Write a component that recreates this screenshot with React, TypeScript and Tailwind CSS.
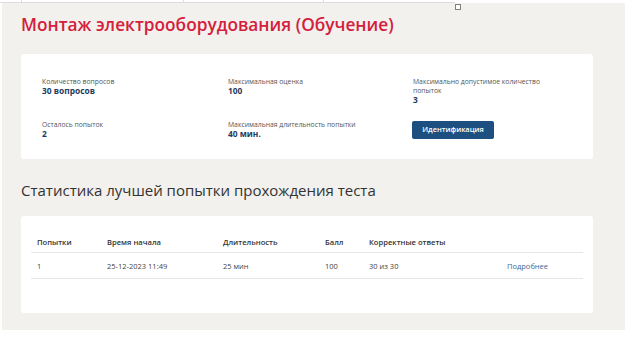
import React from "react";

const font = { fontFamily: '"Open Sans", "Noto Sans", sans-serif' };

function Info({ label, value }: { label: React.ReactNode; value: string }) {
  return (
    <div className="flex flex-col">
      <span className="text-[6.8px] leading-[9px] text-[#555]">{label}</span>
      <span className="text-[8.4px] leading-[10px] font-bold text-[#1f3b5e]">{value}</span>
    </div>
  );
}

export default function App() {
  return (
    <div className="w-[634px] h-[346px] bg-white relative overflow-hidden" style={font}>
      {/* top document strip */}
      <div className="h-[3px] relative">
        <div className="absolute left-0 top-[2px] w-[455px] h-px bg-[#dcdcdc]" />
        <div className="absolute left-[21px] top-0 w-px h-[3px] bg-[#dcdcdc]" />
        <div className="absolute left-[183px] top-0 w-px h-[3px] bg-[#dcdcdc]" />
        <div className="absolute left-[323px] top-0 w-px h-[3px] bg-[#dcdcdc]" />
      </div>
      <div className="absolute left-[455px] top-[4px] w-[6px] h-[6px] border border-[#808080] bg-white" />
      <div className="ml-[2px] w-[623px] h-[327px] bg-[#f2f1ee] pl-[19px] pt-[9px]">
        <h1 className="text-[17.3px] leading-[26px] font-semibold text-[#d4203b]">
          Монтаж электрооборудования (Обучение)
        </h1>
        <div className="mt-[16px] w-[572px] h-[105px] bg-white rounded-[3px] pl-[21px] pt-[23px]">
          <div className="grid grid-cols-[186px_185px_150px] gap-y-[15px]">
            <Info label="Количество вопросов" value="30 вопросов" />
            <Info label="Максимальная оценка" value="100" />
            <Info label={<>Максимально допустимое количество<br />попыток</>} value="3" />
            <Info label="Осталось попыток" value="2" />
            <Info label="Максимальная длительность попытки" value="40 мин." />
            <div className="-mt-[6px] -ml-[1px]">
              <button className="w-[82px] h-[18px] bg-[#1d4f80] rounded-[2px] text-white text-[7.4px] font-semibold">
                Идентификация
              </button>
            </div>
          </div>
        </div>
        <h2 className="mt-[20px] text-[15px] leading-[22px] text-[#333] font-normal">
          Статистика лучшей попытки прохождения теста
        </h2>
        <div className="mt-[15px] w-[572px] h-[97px] bg-white rounded-[3px] px-[10px] pt-[20px]">
          <div className="border-b border-[#e6e6e6] h-[17px] flex items-start text-[7.6px] font-semibold text-[#333] leading-[12px]">
            <span className="w-[76px] pl-[6px]">Попытки</span>
            <span className="w-[116px]">Время начала</span>
            <span className="w-[102px]">Длительность</span>
            <span className="w-[44px]">Балл</span>
            <span className="w-[138px]">Корректные ответы</span>
            <span></span>
          </div>
          <div className="border-b border-[#e6e6e6] h-[26px] flex items-center text-[7.5px] text-[#444] leading-[12px]">
            <span className="w-[76px] pl-[6px]">1</span>
            <span className="w-[116px]">25-12-2023 11:49</span>
            <span className="w-[102px]">25 мин</span>
            <span className="w-[44px]">100</span>
            <span className="w-[138px]">30 из 30</span>
            <span className="text-[#3c6896]">Подробнее</span>
          </div>
        </div>
      </div>
    </div>
  );
}
